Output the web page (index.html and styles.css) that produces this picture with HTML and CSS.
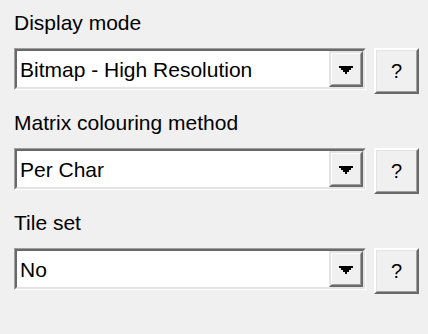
FILE: index.html
```html
<!DOCTYPE html>
<html>
<head>
<meta charset="utf-8">
<link rel="stylesheet" href="styles.css">
</head>
<body>
<div class="panel">
  <div class="group">
    <div class="label">Display mode</div>
    <div class="row">
      <div class="combo">
        <div class="combo-inner">
          <div class="value">Bitmap - High Resolution</div>
          <div class="drop">
            <div class="drop-inner">
              <svg width="14" height="8" viewBox="0 0 14 8"><path d="M0 0H14V2H12V4H10V6H8V8H6V6H4V4H2V2H0Z" fill="#000"/></svg>
            </div>
          </div>
        </div>
      </div>
      <div class="help"><div class="help-inner">?</div></div>
    </div>
  </div>
  <div class="group">
    <div class="label">Matrix colouring method</div>
    <div class="row">
      <div class="combo">
        <div class="combo-inner">
          <div class="value">Per Char</div>
          <div class="drop">
            <div class="drop-inner">
              <svg width="14" height="8" viewBox="0 0 14 8"><path d="M0 0H14V2H12V4H10V6H8V8H6V6H4V4H2V2H0Z" fill="#000"/></svg>
            </div>
          </div>
        </div>
      </div>
      <div class="help"><div class="help-inner">?</div></div>
    </div>
  </div>
  <div class="group">
    <div class="label">Tile set</div>
    <div class="row">
      <div class="combo">
        <div class="combo-inner">
          <div class="value">No</div>
          <div class="drop">
            <div class="drop-inner">
              <svg width="14" height="8" viewBox="0 0 14 8"><path d="M0 0H14V2H12V4H10V6H8V8H6V6H4V4H2V2H0Z" fill="#000"/></svg>
            </div>
          </div>
        </div>
      </div>
      <div class="help"><div class="help-inner">?</div></div>
    </div>
  </div>
</div>
</body>
</html>
```

FILE: styles.css
```css
html, body {
  margin: 0;
  padding: 0;
  background: #f0f0f0;
}
body {
  width: 428px;
  height: 334px;
  overflow: hidden;
  font-family: "Liberation Sans", Arial, sans-serif;
  font-size: 21px;
  color: #000;
}
.panel {
  padding-left: 14px;
}
.group {
  height: 100px;
  box-sizing: border-box;
  padding-top: 11px;
}
.label {
  height: 24px;
  line-height: 24px;
  margin-bottom: 13px;
  white-space: nowrap;
}
.row {
  display: flex;
  align-items: flex-start;
  gap: 8px;
}
.combo {
  width: 352px;
  height: 42px;
  box-sizing: border-box;
  border: 1px solid;
  border-color: #a0a0a0 #ffffff #ffffff #a0a0a0;
}
.combo-inner {
  height: 100%;
  box-sizing: border-box;
  border: 2px solid;
  border-color: #696969 #e3e3e3 #e3e3e3 #696969;
  background: #fff;
  display: flex;
  align-items: stretch;
}
.value {
  flex: 1;
  padding-left: 3px;
  display: flex;
  align-items: center;
  padding-top: 2px;
  white-space: nowrap;
}
.drop {
  width: 34px;
  box-sizing: border-box;
  border: 2px solid;
  border-color: #e3e3e3 #696969 #696969 #e3e3e3;
  background: #f0f0f0;
}
.drop-inner {
  height: 100%;
  box-sizing: border-box;
  border: 1px solid;
  border-color: #ffffff #a0a0a0 #a0a0a0 #ffffff;
  display: flex;
  align-items: center;
  justify-content: center;
  padding-top: 2px;
}
.drop svg {
  display: block;
}
.help {
  width: 45px;
  height: 46px;
  box-sizing: border-box;
  border: 2px solid;
  border-color: #ffffff #696969 #696969 #ffffff;
  background: #f0f0f0;
}
.help-inner {
  height: 100%;
  box-sizing: border-box;
  border: 1px solid;
  border-color: #e3e3e3 #a0a0a0 #a0a0a0 #e3e3e3;
  display: flex;
  align-items: center;
  justify-content: center;
  font-size: 20px;
}
```
